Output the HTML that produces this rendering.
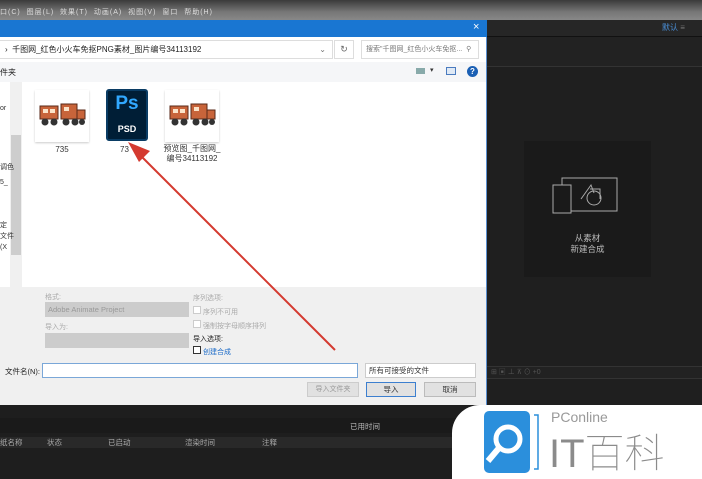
<!DOCTYPE html>
<html><head><meta charset="utf-8"><style>
*{margin:0;padding:0;box-sizing:border-box}
body{width:702px;height:479px;overflow:hidden;background:#232323;font-family:"Liberation Sans","Noto Sans CJK SC",sans-serif;font-size:8px;color:#333;position:relative}
.a{position:absolute}
</style></head><body>
<div class="a" style="left:0;top:0;width:702px;height:20px;background:linear-gradient(#3a3a3a,#777 60%,#888);color:#ddd;font-size:7px;line-height:26px;padding-left:0">
<span style="letter-spacing:1px">口(C)&nbsp;&nbsp;图层(L)&nbsp;&nbsp;效果(T)&nbsp;&nbsp;动画(A)&nbsp;&nbsp;视图(V)&nbsp;&nbsp;窗口&nbsp;&nbsp;帮助(H)</span></div>
<div class="a" style="left:487px;top:20px;width:215px;height:385px;background:#1f1f1f"></div>
<div class="a" style="left:487px;top:20px;width:215px;height:17px;background:#262626;border-bottom:1px solid #111"></div>
<div class="a" style="left:662px;top:22px;color:#4a8fd8;font-size:8px">默认 <span style="color:#777">≡</span></div>
<div class="a" style="left:487px;top:37px;width:215px;height:30px;background:#222;border-bottom:1px solid #333"></div>
<div class="a" style="left:524px;top:141px;width:127px;height:136px;background:#1a1a1a"></div>
<svg class="a" style="left:550px;top:175px" width="75" height="40" viewBox="0 0 75 40"><g fill="none" stroke="#aaa" stroke-width="1"><rect x="12" y="3" width="55" height="33"/><rect x="3" y="10" width="18" height="28" fill="#1a1a1a"/><circle cx="44" cy="23" r="7"/><path d="M31 24 L41 10 L44 18 M40 14 L50 14 L50 24"/></g></svg>
<div class="a" style="left:524px;top:233px;width:127px;text-align:center;color:#bbb;font-size:8.5px;line-height:11px">从素材<br>新建合成</div>
<div class="a" style="left:487px;top:366px;width:215px;height:13px;background:#222;border-top:1px solid #333;border-bottom:1px solid #333;color:#555;font-size:7px;padding-left:4px">⊞ ▣ ⊥ ⊼ ⊙ +0</div>
<!-- dialog -->
<div class="a" style="left:0;top:20px;width:487px;height:385px;background:#f0f0f0;border-right:1px solid #5a8fd0"></div>
<div class="a" style="left:0;top:20px;width:487px;height:17px;background:#1976d2"></div>
<div class="a" style="left:473px;top:21px;color:#fff;font-size:11px">×</div>
<div class="a" style="left:0;top:37px;width:486px;height:25px;background:#fff"></div>
<div class="a" style="left:0;top:40px;width:333px;height:19px;border:1px solid #ddd;border-left:none;font-size:8px;line-height:17px;padding-left:5px;color:#222">›&nbsp; 千图网_红色小火车免抠PNG素材_图片编号34113192<span style="float:right;margin-right:6px;color:#777">⌄</span></div>
<div class="a" style="left:334px;top:40px;width:20px;height:19px;border:1px solid #ddd;color:#666;font-size:9px;text-align:center;line-height:17px">↻</div>
<div class="a" style="left:361px;top:40px;width:118px;height:19px;border:1px solid #ddd;color:#777;font-size:7px;line-height:17px;padding-left:4px">搜索"千图网_红色小火车免抠...&nbsp; ⚲</div>
<div class="a" style="left:0;top:62px;width:486px;height:20px;background:#f5f6f8"></div>
<div class="a" style="left:0;top:67px;font-size:8px;color:#222">件夹</div>
<div class="a" style="left:416px;top:68px;width:9px;height:6px;background:#8aa;"></div>
<div class="a" style="left:430px;top:66px;font-size:7px;color:#333">▾</div>
<div class="a" style="left:446px;top:67px;width:10px;height:8px;border:1px solid #4a7bbf;background:#dfe9f5"></div>
<div class="a" style="left:467px;top:66px;width:11px;height:11px;border-radius:50%;background:#1a5fb4;color:#fff;font-size:8px;font-weight:bold;text-align:center;line-height:11px">?</div>
<div class="a" style="left:0;top:82px;width:486px;height:205px;background:#fff"></div>
<div class="a" style="left:10px;top:82px;width:12px;height:205px;background:#f0f0f0"></div>
<div class="a" style="left:11px;top:135px;width:10px;height:120px;background:#cdcdcd"></div>
<div class="a" style="left:0;top:105px;font-size:7px">or</div>
<div class="a" style="left:0;top:162px;font-size:7px">调色<br><br>5_</div>
<div class="a" style="left:0;top:220px;font-size:7px;line-height:11px">定<br>文件<br>(X</div>
<!-- thumbnails -->
<div class="a" style="left:35px;top:90px;width:54px;height:52px;background:#fff;box-shadow:0 1px 2px #ccc"></div>
<svg class="a" style="left:37px;top:100px" width="50" height="28" viewBox="0 0 50 28"><g fill="#c8643a" stroke="#5a2a18" stroke-width="1"><rect x="3" y="6" width="18" height="13"/><rect x="24" y="4" width="16" height="15"/><rect x="40" y="10" width="8" height="9"/></g><g fill="#fbe3c8"><rect x="6" y="9" width="5" height="4"/><rect x="13" y="9" width="5" height="4"/><rect x="27" y="7" width="5" height="4"/></g><g fill="#333"><circle cx="8" cy="22" r="3.5"/><circle cx="17" cy="22" r="3.5"/><circle cx="29" cy="22" r="3.5"/><circle cx="38" cy="22" r="3.5"/><circle cx="45" cy="22" r="3"/></g></svg>
<div class="a" style="left:35px;top:145px;width:54px;text-align:center;font-size:8px">735</div>
<div class="a" style="left:106px;top:89px;width:42px;height:52px;background:#001e36;border-radius:3px;border:2px solid #0a3c64"></div>
<div class="a" style="left:106px;top:93px;width:42px;text-align:center;color:#31a8ff;font-size:19px;font-weight:bold">Ps</div>
<div class="a" style="left:106px;top:124px;width:42px;text-align:center;color:#fff;font-size:9px;font-weight:bold">PSD</div>
<div class="a" style="left:120px;top:145px;font-size:8px">73</div>
<div class="a" style="left:165px;top:90px;width:54px;height:52px;background:#fff;box-shadow:0 1px 2px #ccc"></div>
<svg class="a" style="left:167px;top:100px" width="50" height="28" viewBox="0 0 50 28"><g fill="#c8643a" stroke="#5a2a18" stroke-width="1"><rect x="3" y="6" width="18" height="13"/><rect x="24" y="4" width="16" height="15"/><rect x="40" y="10" width="8" height="9"/></g><g fill="#fbe3c8"><rect x="6" y="9" width="5" height="4"/><rect x="13" y="9" width="5" height="4"/><rect x="27" y="7" width="5" height="4"/></g><g fill="#333"><circle cx="8" cy="22" r="3.5"/><circle cx="17" cy="22" r="3.5"/><circle cx="29" cy="22" r="3.5"/><circle cx="38" cy="22" r="3.5"/><circle cx="45" cy="22" r="3"/></g></svg>
<div class="a" style="left:160px;top:144px;width:64px;text-align:center;font-size:8px;line-height:10px">预览图_千图网_<br>编号34113192</div>
<!-- lower -->
<div class="a" style="left:45px;top:292px;color:#aaa;font-size:7px">格式:</div>
<div class="a" style="left:45px;top:302px;width:144px;height:15px;background:#ccc;color:#999;font-size:7.5px;line-height:15px;padding-left:3px">Adobe Animate Project</div>
<div class="a" style="left:45px;top:322px;color:#aaa;font-size:7px">导入为:</div>
<div class="a" style="left:45px;top:333px;width:144px;height:15px;background:#ccc"></div>
<div class="a" style="left:193px;top:292px;color:#aaa;font-size:7px;line-height:14px">序列选项:<br><span style="display:inline-block;width:8px;height:8px;border:1px solid #ccc;background:#fff"></span> 序列不可用<br><span style="display:inline-block;width:8px;height:8px;border:1px solid #ccc;background:#fff"></span> 强制按字母顺序排列</div>
<div class="a" style="left:193px;top:333px;color:#222;font-size:7px;line-height:13px">导入选项:<br><span style="display:inline-block;width:8px;height:8px;border:1px solid #333;background:#fff"></span> <span style="color:#1a6ac8">创建合成</span></div>
<div class="a" style="left:5px;top:366px;font-size:7.5px;color:#222">文件名(N):</div>
<div class="a" style="left:42px;top:363px;width:316px;height:15px;background:#fff;border:1px solid #7aa7d8"></div>
<div class="a" style="left:365px;top:363px;width:111px;height:15px;background:#fff;border:1px solid #ccc;font-size:7.5px;line-height:13px;padding-left:3px">所有可接受的文件</div>
<div class="a" style="left:307px;top:382px;width:52px;height:15px;background:#e1e1e1;border:1px solid #ccc;color:#999;font-size:7px;text-align:center;line-height:13px">导入文件夹</div>
<div class="a" style="left:366px;top:382px;width:50px;height:15px;background:#e1e1e1;border:1px solid #3c7fcf;font-size:7.5px;text-align:center;line-height:13px">导入</div>
<div class="a" style="left:424px;top:382px;width:52px;height:15px;background:#e1e1e1;border:1px solid #bbb;font-size:7.5px;text-align:center;line-height:13px">取消</div>
<!-- arrow -->
<svg class="a" style="left:0;top:0" width="702" height="479"><path d="M335 350 L140 155" stroke="#d43a30" stroke-width="2"/><path d="M128 142 L150 151 L139 162 Z" fill="#d43a30"/></svg>
<!-- bottom -->
<div class="a" style="left:0;top:405px;width:702px;height:74px;background:#1e1e1e"></div>
<div class="a" style="left:0;top:418px;width:702px;height:15px;background:#1a1a1a"></div>
<div class="a" style="left:350px;top:421px;color:#bbb;font-size:7.5px">已用时间</div>
<div class="a" style="left:0;top:437px;width:452px;height:11px;background:#292929;color:#aaa;font-size:7.5px;line-height:11px"></div>
<div class="a" style="left:0;top:437px;color:#aaa;font-size:7.5px;line-height:11px">纸名称</div>
<div class="a" style="left:47px;top:437px;color:#aaa;font-size:7.5px;line-height:11px">状态</div>
<div class="a" style="left:108px;top:437px;color:#aaa;font-size:7.5px;line-height:11px">已启动</div>
<div class="a" style="left:185px;top:437px;color:#aaa;font-size:7.5px;line-height:11px">渲染时间</div>
<div class="a" style="left:262px;top:437px;color:#aaa;font-size:7.5px;line-height:11px">注释</div>
<!-- logo -->
<div class="a" style="left:452px;top:405px;width:250px;height:74px;background:#fff;border-top-left-radius:28px"></div>
<div class="a" style="left:484px;top:411px;width:46px;height:62px;background:#2b8fdc;border-radius:5px"></div>
<svg class="a" style="left:484px;top:411px" width="60" height="62"><circle cx="24" cy="28" r="12" fill="none" stroke="#fff" stroke-width="5"/><path d="M15 37 L4 50" stroke="#fff" stroke-width="6"/><path d="M50 4 L54 4 L54 58 L50 58" fill="none" stroke="#2b8fdc" stroke-width="1.5"/></svg>
<div class="a" style="left:551px;top:409px;color:#999;font-size:14px">PConline</div>
<div class="a" style="left:549px;top:428px;color:#777;font-size:40px;line-height:44px;letter-spacing:0px;font-weight:normal;-webkit-text-stroke:0;opacity:.85">IT<span style="font-family:'Noto Sans CJK SC';font-weight:100">百科</span></div>
</body></html>
